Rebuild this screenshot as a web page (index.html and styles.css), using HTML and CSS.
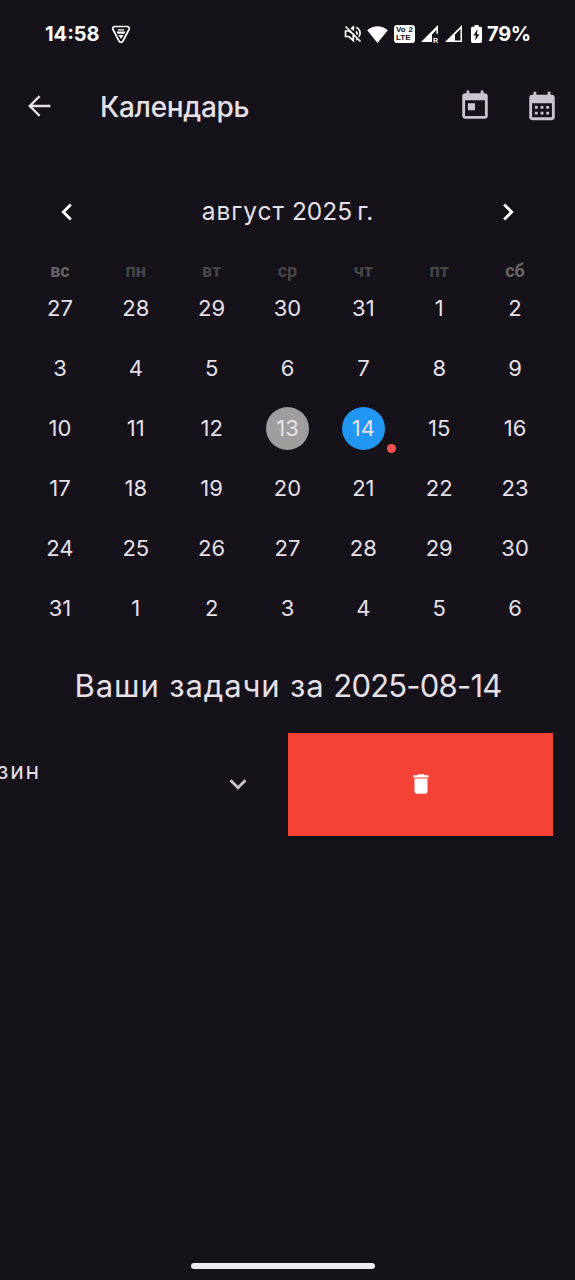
FILE: index.html
```html
<!DOCTYPE html>
<html lang="ru">
<head>
<meta charset="utf-8">
<title>Календарь</title>
<link rel="stylesheet" href="styles.css">
</head>
<body>
<div class="screen">
  <div class="status">
    <span class="time">14:58</span>
    <svg class="vpn" width="20" height="19" viewBox="0 0 20 19"><path d="M4 1.5h12c2 0 2.800 1.400 2 3l-6 11.500c-1 1.700-3 1.700-4 0L2 4.500c-.8-1.600 0-3 2-3z" fill="none" stroke="#fff" stroke-width="1.700"/><path d="M7 4.300h6v1.200H7zM5.500 6.500h9l-1 2.200h-7zM7.300 10h5.400L10 14z" fill="#fff"/></svg>
    <div class="signals">
      <svg class="mute" width="18" height="18" viewBox="0 0 18 18" fill="none" stroke="#fff" stroke-width="1.700"><path d="M1.500 1.500l15 15M1.500 6.500v5h3.300l4.500 4V9L5 6H1.500zM7 4l2.300-2v3.500M12 6.300c1 .8 1.400 2.200 1 3.500M12 2.200c4 1.500 5.300 6 3 9.700M12 14.800l1.500-.6"/></svg>
      <svg class="wifi" width="21" height="17" viewBox="0 0 21 17"><path d="M10.500 17L.2 4.300C6.300-1 14.700-1 20.800 4.300z" fill="#fff"/></svg>
      <div class="volte"><div class="vo"><span>Vo</span><span>2</span></div><div>LTE</div></div>
      <svg class="cell" width="18" height="18" viewBox="0 0 18 18"><path d="M0 17L17 0v9h-1.500V5L11 9.500V17z" fill="#fff"/><text x="12" y="17.500" class="roam">R</text></svg>
      <svg class="cell" width="18" height="18" viewBox="0 0 18 18"><path d="M0 17L17 0v17zM10 15.500h5.500V4L10 9.500z" fill="#fff" fill-rule="evenodd"/></svg>
      <svg class="battery" width="11" height="18" viewBox="0 0 11 18"><path d="M3.500 0h4v1.800h2c1 0 1.500.6 1.500 1.500v13c0 1-.5 1.700-1.500 1.700h-8C.5 18 0 17.300 0 16.300v-13c0-.9.500-1.500 1.500-1.500h2z" fill="#fff"/><path d="M6.500 4L2.500 10.500h2.300L4.300 15.500l4.200-6.300H6z" fill="#15121a"/></svg>
      <span class="percent">79%</span>
    </div>
  </div>

  <header class="appbar">
    <svg class="back" width="34" height="34" viewBox="0 0 24 24"><path d="M20 11.200H7.500l5.500-5.600L11.900 4.400 4.300 12l7.600 7.600 1.100-1.200-5.500-5.600H20z" fill="#e6e0e9"/></svg>
    <h1>Календарь</h1>
    <svg class="action" width="34" height="34" viewBox="0 0 24 24"><path d="M19 3h-1V1h-2v2H8V1H6v2H5c-1.110 0-1.990.9-1.990 2L3 19c0 1.100.89 2 2 2h14c1.100 0 2-.9 2-2V5c0-1.100-.9-2-2-2zm0 16H5V8h14v11zM7 10h5v5H7z"/></svg>
    <svg class="action" width="34" height="34" viewBox="0 0 24 24"><path d="M19 4h-1V2h-2v2H8V2H6v2H5c-1.110 0-1.990.9-1.990 2L3 20c0 1.100.89 2 2 2h14c1.100 0 2-.9 2-2V6c0-1.100-.9-2-2-2zm0 16H5V10h14v10zM9 14H7v-2h2v2zm4 0h-2v-2h2v2zm4 0h-2v-2h2v2zm-8 4H7v-2h2v2zm4 0h-2v-2h2v2zm4 0h-2v-2h2v2z"/></svg>
  </header>

  <div class="month">
    <svg width="34" height="34" viewBox="0 0 24 24"><path d="M15.410 7.410L14 6l-6 6 6 6 1.410-1.410L10.830 12z" fill="#fff"/></svg>
    <span class="month-name"><span class="month-word">август</span> 2025<span class="year-mark">г.</span></span>
    <svg width="34" height="34" viewBox="0 0 24 24"><path d="M10 6L8.590 7.410 13.170 12l-4.580 4.590L10 18l6-6z" fill="#fff"/></svg>
  </div>

  <div class="week">
    <span class="off">вс</span><span>пн</span><span>вт</span><span>ср</span><span>чт</span><span>пт</span><span class="off">сб</span>
  </div>
  <div class="days">
    <span>27</span><span>28</span><span>29</span><span>30</span><span>31</span><span>1</span><span>2</span>
    <span>3</span><span>4</span><span>5</span><span>6</span><span>7</span><span>8</span><span>9</span>
    <span>10</span><span>11</span><span>12</span><span><b class="today">13</b></span><span><b class="selected">14<i class="dot"></i></b></span><span>15</span><span>16</span>
    <span>17</span><span>18</span><span>19</span><span>20</span><span>21</span><span>22</span><span>23</span>
    <span>24</span><span>25</span><span>26</span><span>27</span><span>28</span><span>29</span><span>30</span>
    <span>31</span><span>1</span><span>2</span><span>3</span><span>4</span><span>5</span><span>6</span>
  </div>

  <h2><span class="tasks-label">Ваши задачи за</span> <span class="tasks-date">2025-08-14</span></h2>

  <div class="task">
    <div class="task-body">
      <span class="task-name">зин</span>
      <svg class="expand" width="34" height="34" viewBox="0 0 24 24"><path d="M16.590 8.590L12 13.170 7.410 8.590 6 10l6 6 6-6z" fill="#cac4d0"/></svg>
    </div>
    <div class="remove">
      <svg width="26" height="26" viewBox="0 0 24 24"><path d="M6 19c0 1.100.9 2 2 2h8c1.100 0 2-.9 2-2V7H6v12zM19 4h-3.500l-1-1h-5l-1 1H5v2h14V4z" fill="#fff"/></svg>
    </div>
  </div>

  <div class="home"></div>
</div>
</body>
</html>
```
FILE: styles.css
```css
* { box-sizing: border-box; }
body { margin: 0; background: #151219; }
.screen {
  width: 575px; height: 1280px; overflow: hidden;
  display: flex; flex-direction: column;
  background: #151219; color: #e6e0e9;
  font-family: Inter, "Noto Sans", sans-serif;
}
svg { display: block; flex: none; }

.status { height: 68px; display: flex; align-items: center; padding: 0 45px; color: #fff; }
.time { font-size: 20px; font-weight: 700; width: 66px; white-space: nowrap; }
.signals { margin-left: auto; display: flex; align-items: center; }
.wifi { margin-left: 5px; }
.volte {
  margin-left: 6px; width: 21px; height: 18px; padding: 1px 2px; border-radius: 3px;
  background: #fff; color: #151219; font: 700 8px/8px "Liberation Sans", sans-serif;
}
.vo { display: flex; justify-content: space-between; }
.cell { margin-left: 6px; }
.roam { font: 700 7px "Liberation Sans", sans-serif; fill: #fff; }
.battery { margin-left: 8px; }
.percent { margin-left: 5px; width: 43px; font-size: 20px; font-weight: 700; letter-spacing: -0.3px; white-space: nowrap; }

.appbar { height: 76px; display: flex; align-items: center; padding: 0 16px 0 22px; }
h1 { margin: 2px auto 0 44px; font-size: 28px; font-weight: 500; line-height: 40px; letter-spacing: -0.3px; }
.action { fill: #cac4d0; }
.action + .action { margin-left: 33px; }

.month { margin-top: 34px; height: 68px; padding: 0 50px 0 50px; display: flex; align-items: center; justify-content: space-between; }
.month-name { font-size: 24.500px; font-weight: 400; white-space: nowrap; margin-bottom: 2px; }
.month-word { letter-spacing: 1px; }
.year-mark { margin-left: 5px; }

.week, .days { display: grid; grid-template-columns: repeat(7, 1fr); width: 531px; margin-left: 22px; text-align: center; }
.week { height: 32.500px; font: 700 18px/50px Roboto, sans-serif; color: #494649; }
.week .off { color: #686568; }
.days { grid-auto-rows: 59.850px; font-size: 22px; font-weight: 400; }
.days > span { display: flex; align-items: center; justify-content: center; }
.today, .selected { width: 43px; height: 43px; border-radius: 50%; display: flex; align-items: center; justify-content: center; font-weight: 400; position: relative; }
.today { background: #9e9e9e; }
.selected { background: #2196f3; }
.dot { position: absolute; left: 45px; top: 37px; width: 9px; height: 9px; border-radius: 50%; background: #ff5252; }

h2 { margin: 28.500px 0 0; height: 40px; padding-left: 1px; font-size: 31px; font-weight: 400; line-height: 40px; text-align: center; white-space: nowrap; }
.tasks-label { letter-spacing: 0.900px; }
.tasks-date { letter-spacing: -0.800px; }

.task { margin-top: 27px; height: 103px; display: flex; width: 553px; }
.task-body { width: 288px; display: flex; justify-content: space-between; align-items: center; padding: 0 33px 1px 0; }
.task-name { font-size: 23px; font-weight: 400; letter-spacing: 1.800px; margin: 0 0 27px -3px; }
.remove { flex: 1; padding-bottom: 1px; background: #f44336; display: flex; align-items: center; justify-content: center; }

.home { margin: auto auto 11px; position: relative; left: -5px; width: 184px; height: 6px; border-radius: 3px; background: #eeebef; }
```
